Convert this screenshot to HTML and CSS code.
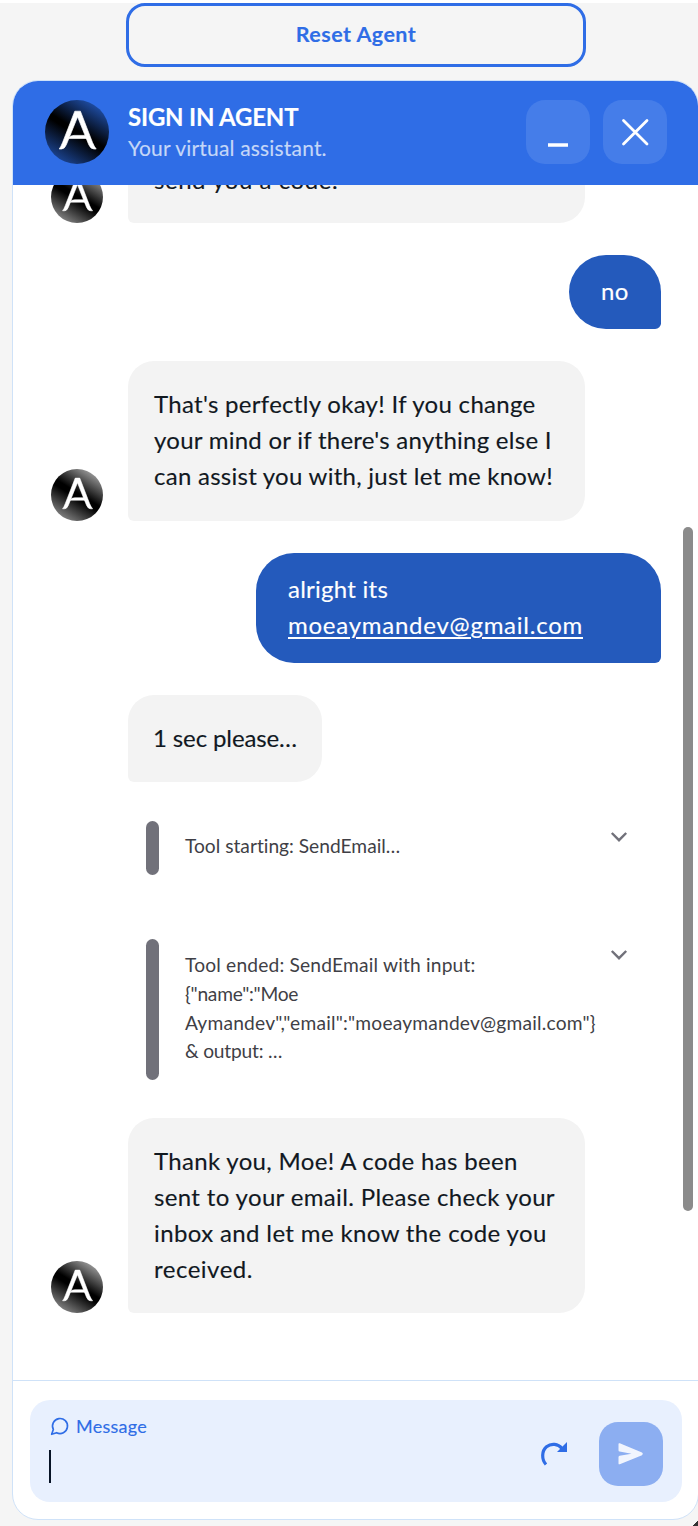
FILE: index.html
```html
<!DOCTYPE html>
<html lang="en">
<head>
<meta charset="utf-8">
<title>Sign in agent</title>
<link rel="stylesheet" href="styles.css">
</head>
<body>
<svg class="defs" aria-hidden="true">
  <defs>
    <symbol id="mark" viewBox="0 0 64 64">
      <g fill="#fff" stroke="#fff" stroke-width="0.700">
        <path d="M29.800 11.200H35.400L47.500 42.500Q49.200 46.600 51.200 49H49Q45.600 49 43.800 44.800L32.600 16.800L21.300 44.800Q19.600 49 16.400 49H14.200Q16 46.800 17.600 42.500Z"/>
        <path d="M23.500 38.400Q25 35.400 29 35.400H41L42.200 38.400Z"/>
      </g>
    </symbol>
  </defs>
</svg>
<div class="page">
  <button class="reset"><span class="t-reset">Reset Agent</span></button>
  <section class="chat">
    <header class="head">
      <span class="avatar avatar-lg"><svg><use href="#mark"/></svg></span>
      <div class="who">
        <div class="name">SIGN IN AGENT</div>
        <div class="sub">Your virtual assistant.</div>
      </div>
      <button class="hbtn"><svg viewBox="0 0 64 64"><path d="M22 45H42" stroke="#fff" stroke-width="3.500"/></svg></button>
      <button class="hbtn"><svg viewBox="0 0 64 64"><path d="M20.500 20.500L44 44M44 20.500L20.500 44" stroke="#fff" stroke-width="2.800" stroke-linecap="round"/></svg></button>
    </header>
    <main class="log">
      <div class="row cut">
        <span class="avatar"><svg><use href="#mark"/></svg></span>
        <div class="bubble wide"><span class="l l0">send you a code.</span></div>
      </div>
      <div class="row mine"><div class="bubble user"><span class="l u0">no</span></div></div>
      <div class="row">
        <span class="avatar"><svg><use href="#mark"/></svg></span>
        <div class="bubble wide">
          <span class="l l1">That's perfectly okay! If you change</span>
          <span class="l l2">your mind or if there's anything else I</span>
          <span class="l l3">can assist you with, just let me know!</span>
        </div>
      </div>
      <div class="row mine">
        <div class="bubble user long">
          <span class="l u1">alright its</span>
          <span class="l u2"><a>moeaymandev@gmail.com</a></span>
        </div>
      </div>
      <div class="row"><div class="bubble short"><span class="l l4">1 sec please…</span></div></div>
      <div class="tool first">
        <div class="tooltext"><span class="l s1">Tool starting: SendEmail…</span></div>
        <svg class="chev" viewBox="0 0 18 12"><path d="M1.800 2L9 9.200L16.200 2" fill="none" stroke="#71717a" stroke-width="2.400"/></svg>
      </div>
      <div class="tool second">
        <div class="tooltext">
          <span class="l s2">Tool ended: SendEmail with input:</span>
          <span class="l s3">{"name":"Moe</span>
          <span class="l s4">Aymandev","email":"moeaymandev@gmail.com"}</span>
          <span class="l s5">&amp; output: …</span>
        </div>
        <svg class="chev" viewBox="0 0 18 12"><path d="M1.800 2L9 9.200L16.200 2" fill="none" stroke="#71717a" stroke-width="2.400"/></svg>
      </div>
      <div class="row">
        <span class="avatar"><svg><use href="#mark"/></svg></span>
        <div class="bubble wide last">
          <span class="l l5">Thank you, Moe! A code has been</span>
          <span class="l l6">sent to your email. Please check your</span>
          <span class="l l7">inbox and let me know the code you</span>
          <span class="l l8">received.</span>
        </div>
      </div>
      <span class="thumb"></span>
    </main>
    <footer class="foot">
      <div class="composer">
        <div class="field">
          <div class="label">
            <svg viewBox="0 0 24 24"><path d="M7.900 20A9 9 0 1 0 4 16.100L2 22Z" fill="none" stroke="#2f6de6" stroke-width="2" stroke-linejoin="round"/></svg>
            <span class="t-msg">Message</span>
          </div>
          <span class="caret"></span>
        </div>
        <svg class="redo" viewBox="0 0 28 26"><path d="M6 23.500C1.500 18.500 1.500 10 6.500 5.800C11.500 1.800 18 2.800 22 7.500" fill="none" stroke="#2f6de6" stroke-width="3.200"/><path d="M27 1V11H17Z" fill="#2f6de6"/></svg>
        <button class="send"><svg viewBox="0 0 64 64"><path d="M20.800 21.300Q19.500 20.800 19.500 22V28.200Q19.500 29.300 20.600 29.600L32.500 31.800L20.600 33.800Q19.500 34.100 19.500 35.200V41.500Q19.500 42.700 20.800 42.200L43 33.200Q44.800 32 43 30.600Z" fill="#f1f5fe"/></svg></button>
      </div>
    </footer>
  </section>
  <span class="corner"></span>
</div>
</body>
</html>
```
FILE: styles.css
```css
* { box-sizing: border-box; }
body { margin: 0; background: #f5f5f5; font-family: Lato, "Open Sans", sans-serif; color: #11181f; font-variant-ligatures: none; -webkit-text-stroke: 0.14px currentColor; }
button { font: inherit; padding: 0; border: 0; }
svg { display: block; }
.defs { position: absolute; width: 0; height: 0; }
.page { position: relative; width: 698px; height: 1526px; border-top: 3px solid #fff; overflow: hidden; background: #f5f5f5; }
.reset { display: flex; align-items: center; justify-content: center; width: 460px; height: 64px; margin: 0 0 13px 126px; padding-bottom: 2px; border: 3px solid #2f6de6; border-radius: 19px; background: transparent; color: #2f6de6; font-size: 21.5px; font-weight: 700; letter-spacing: 0.45px; }
.chat { display: flex; flex-direction: column; width: 687px; height: 1440px; margin-left: 12px; border: 1px solid #cfe2f8; border-radius: 26px; background: #fff; overflow: hidden; }
.head { display: flex; align-items: center; flex: 0 0 104px; padding: 0 32px 2px; background: #2f6de6; color: #fff; }
.avatar { flex: none; width: 52px; height: 52px; border-radius: 50%; background: linear-gradient(212deg, #999 12%, #000 47%, #000 54%, #888 90%); }
.avatar svg { width: 100%; height: 100%; }
.avatar-lg { width: 64px; height: 64px; background: linear-gradient(212deg, #1f4ea6 12%, #000 48%, #000 53%, #1d489a 90%); }
.who { flex: 1; margin-left: 19px; padding-top: 1px; white-space: nowrap; }
.name { font-size: 24px; line-height: 32px; font-weight: 700; letter-spacing: -0.2px; }
.sub { margin-top: -1px; font-size: 21px; line-height: 32px; color: #c5d7f8; letter-spacing: 0.17px; }
.hbtn { width: 64px; height: 64px; border-radius: 19px; background: #457de9; }
.hbtn + .hbtn { margin: 0 -1px 0 13px; }
.log { position: relative; display: flex; flex-direction: column; flex: 0 0 1195px; padding-left: 38px; overflow: hidden; }
.row { display: flex; align-items: flex-end; flex: none; margin-bottom: 32px; }
.cut { height: 38px; }
.bubble { padding: 25px 26px 26px; border-radius: 26px 26px 26px 6px; background: #f3f3f3; font-size: 24px; line-height: 36px; }
.l { display: block; width: max-content; white-space: pre; }
.l0 { letter-spacing: 0.55px; }
.l1 { letter-spacing: 0.3px; }
.l2, .l3 { letter-spacing: 0.26px; }
.l4 { margin-left: -1px; letter-spacing: -0.12px; }
.l5 { letter-spacing: 0.32px; }
.l6 { letter-spacing: 0.35px; }
.l7 { letter-spacing: 0.37px; }
.l8 { letter-spacing: 0.5px; }
.u0, .u1 { letter-spacing: 0.25px; }
.u2 { letter-spacing: 0.75px; }
.s2 { letter-spacing: 0.18px; }
.s4 { letter-spacing: 0.2px; }
.s3 { letter-spacing: -0.25px; }
.s5 { letter-spacing: -0.2px; }
.wide { width: 457px; margin-left: 25px; padding-bottom: 27px; }
.cut .wide { padding-bottom: 25px; }
.last { padding-bottom: 26px; }
.short { width: 194px; margin-left: 77px; }
.mine { justify-content: flex-end; padding-right: 37px; }
.user { width: 92px; padding: 18px 30px 20px 32px; border-radius: 38px 38px 6px 38px; background: #245abc; color: #fff; }
.long { width: 405px; }
.user a { text-decoration: underline; text-decoration-thickness: 2px; text-underline-offset: 3px; }
.tool { display: flex; flex: none; justify-content: space-between; align-items: flex-start; width: 482px; margin-left: 95px; }
.tool::before { content: ""; align-self: stretch; width: 13px; border-radius: 7px; background: #71717a; }
.first { height: 54px; margin-top: 7px; margin-bottom: 64px; }
.second { height: 141px; margin-bottom: 38px; }
.tooltext { flex: 1; width: 400px; margin-left: 26px; padding-top: 12px; color: #3f3f46; font-size: 19.2px; line-height: 28.8px; -webkit-text-stroke-width: 0; }
.first .tooltext { padding-top: 11px; }
.chev { width: 18px; height: 12px; margin-top: 10px; }
.thumb { position: absolute; left: 670px; top: 342px; width: 10px; height: 684px; border-radius: 5px; background: #8b8b8b; }
.foot { flex: 1; padding: 19px 15px 17px 17px; border-top: 1px solid #cfe2f8; }
.composer { display: flex; align-items: flex-start; width: 652px; height: 102px; border-radius: 20px; background: #e8f0fe; }
.field { flex: 1; padding: 15px 0 0 20px; }
.label { display: flex; align-items: center; gap: 6px; height: 22px; color: #2f6de6; font-size: 18px; line-height: 22px; letter-spacing: 0.25px; }
.label svg { width: 20px; height: 20px; }
.caret { display: block; width: 2px; height: 33px; margin: 13px 0 0 -1px; background: #071326; }
.redo { width: 28px; height: 26px; margin: 41px 31px 0 0; }
.send { width: 64px; height: 64px; margin: 22px 19px 0 0; border-radius: 19px; background: #8caef1; }
.corner { position: absolute; right: 0; bottom: 0; width: 6px; height: 6px; background: linear-gradient(135deg, transparent 50%, #333 52%); }
```
